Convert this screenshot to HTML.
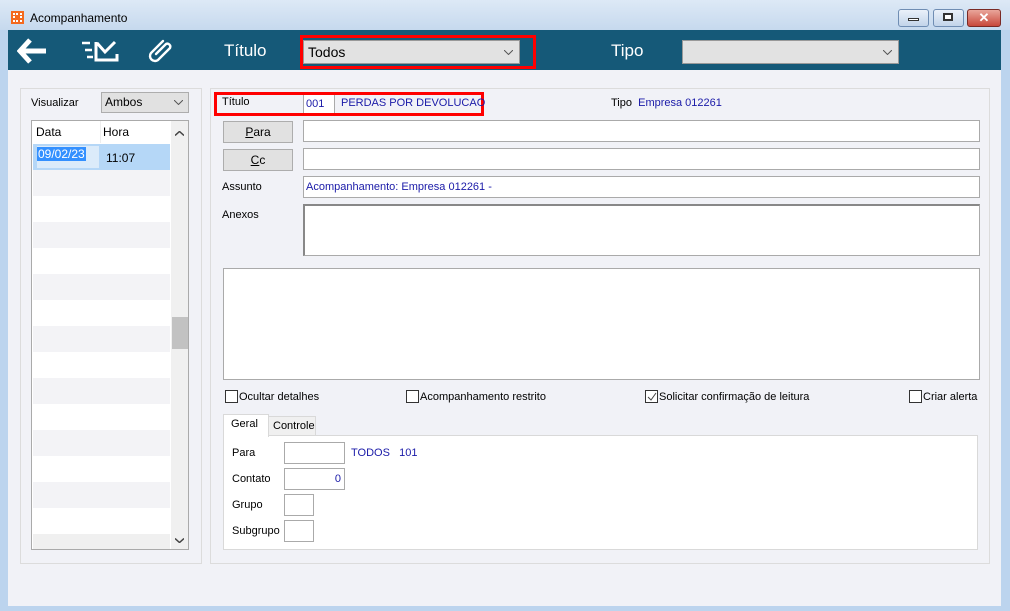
<!DOCTYPE html><html><head><meta charset="utf-8"><style>
*{box-sizing:border-box;margin:0;padding:0}
body{width:1010px;height:611px;overflow:hidden;background:#bcd4ee;font-family:"Liberation Sans",sans-serif;font-size:11px;color:#000;position:relative}
.a{position:absolute}
.tb{left:0;top:0;width:1010px;height:30px;background:linear-gradient(#dde9f6,#c6d9ee)}
.in{background:#fff;border:1px solid #aaa}
.btn{background:#e1e1e1;border:1px solid #adadad;text-align:center;line-height:20px;font-size:12px}
.cb{width:13px;height:13px;border:1px solid #333;background:#fff}
.blue{color:#1a1aa8}
.chev{position:absolute;width:9px;height:5px}
</style></head><body>
<div class="a tb"></div>
<div class="a" style="left:11px;top:11px;width:13px;height:13px;background:#f46a1f"></div>
<div class="a" style="left:13px;top:13px;width:9px;height:9px;border:2px dotted #fff"></div>
<div class="a" style="left:30px;top:11px;font-size:12px">Acompanhamento</div>
<div class="a" style="left:898px;top:9px;width:31px;height:18px;border:1px solid #6f8db3;border-radius:3px;background:linear-gradient(#eaf1fa,#c2d4ea)"></div>
<div class="a" style="left:908px;top:18px;width:11px;height:3px;border:1px solid #333;background:#fff"></div>
<div class="a" style="left:933px;top:9px;width:31px;height:18px;border:1px solid #6f8db3;border-radius:3px;background:linear-gradient(#eaf1fa,#c2d4ea)"></div>
<div class="a" style="left:943px;top:13px;width:10px;height:8px;border:2px solid #333;background:#fff"></div>
<div class="a" style="left:967px;top:9px;width:34px;height:18px;border:1px solid #7a2a25;border-radius:3px;background:linear-gradient(#e9a69b,#c8483b);color:#fff;text-align:center;font-weight:bold;font-size:13px;line-height:16px">✕</div>
<div class="a" style="left:8px;top:30px;width:993px;height:576px;background:#f1f2f7"></div>
<div class="a" style="left:8px;top:30px;width:993px;height:40px;background:#155978"></div>
<svg class="a" style="left:17px;top:38px" width="32" height="26" viewBox="0 0 32 26"><path d="M13 2 L3 13 L13 24 M3 13 H29" stroke="#fff" stroke-width="5" fill="none"/></svg>
<svg class="a" style="left:80px;top:40px" width="40" height="22" viewBox="0 0 40 22"><path d="M2 3h8M5 10h7M7 17h6" stroke="#fff" stroke-width="2.5"/><path d="M16 2v18h21V14" stroke="#fff" stroke-width="3" fill="none"/><path d="M17 3l8 9 10-10" stroke="#fff" stroke-width="3" fill="none"/></svg>
<svg class="a" style="left:148px;top:38px" width="26" height="26" viewBox="0 0 26 26"><path d="M8 16 L18 6 a3 3 0 0 1 4 4 L10 22 a5 5 0 0 1-7-7 L15 3" stroke="#fff" stroke-width="2.4" fill="none" stroke-linecap="round"/></svg>
<div class="a" style="left:224px;top:41px;color:#fff;font-size:17px">Título</div>
<div class="a" style="left:300px;top:35px;width:236px;height:34px;border:3px solid #f00"></div>
<div class="a" style="left:303px;top:40px;width:217px;height:24px;background:#e2e2e2;border:1px solid #999;font-size:14px;line-height:22px;padding-left:4px">Todos<svg class="chev" style="right:6px;top:9px" viewBox="0 0 9 5"><path d="M0 0l4.5 4.5L9 0" stroke="#555" fill="none"/></svg></div>
<div class="a" style="left:611px;top:41px;color:#fff;font-size:17px">Tipo</div>
<div class="a" style="left:682px;top:40px;width:217px;height:24px;background:#e2e2e2;border:1px solid #999"><svg class="chev" style="right:6px;top:9px" viewBox="0 0 9 5"><path d="M0 0l4.5 4.5L9 0" stroke="#555" fill="none"/></svg></div>

<div class="a" style="left:20px;top:88px;width:182px;height:476px;border:1px solid #dcdcdc"></div>
<div class="a" style="left:31px;top:97px">Visualizar</div>
<div class="a" style="left:101px;top:92px;width:88px;height:21px;background:#e1e1e1;border:1px solid #adadad;padding-left:3px;line-height:19px;font-size:12px">Ambos<svg class="chev" style="right:5px;top:7px" viewBox="0 0 9 5"><path d="M0 0l4.5 4.5L9 0" stroke="#555" fill="none"/></svg></div>
<div class="a" style="left:31px;top:120px;width:158px;height:430px;border:1px solid #aaa;background:#fff;overflow:hidden">
 <div class="a" style="left:2px;top:0;width:136px;height:23px;line-height:23px;padding-left:2px;font-size:12px">Data</div>
 <div class="a" style="left:68px;top:0;height:22px;border-left:1px solid #eee;line-height:23px;padding-left:2px;font-size:12px">Hora</div>
 <div class="a" style="left:1px;top:23px;width:137px;height:26px;background:#b5d7f7"></div>
 <div class="a" style="left:5px;top:25px;width:62px;height:22px;background:#dbebfa"></div>
 <div class="a" style="left:5px;top:26px;background:#3390ff;color:#fff;padding:0 1px;font-size:12px">09/02/23</div>
 <div class="a" style="left:74px;top:30px;font-size:12px">11:07</div>
 <div class="a" style="left:1px;top:49px;width:137px;height:26px;background:#f3f3f6"></div>
 <div class="a" style="left:1px;top:101px;width:137px;height:26px;background:#f3f3f6"></div>
 <div class="a" style="left:1px;top:153px;width:137px;height:26px;background:#f3f3f6"></div>
 <div class="a" style="left:1px;top:205px;width:137px;height:26px;background:#f3f3f6"></div>
 <div class="a" style="left:1px;top:257px;width:137px;height:26px;background:#f3f3f6"></div>
 <div class="a" style="left:1px;top:309px;width:137px;height:26px;background:#f3f3f6"></div>
 <div class="a" style="left:1px;top:361px;width:137px;height:26px;background:#f3f3f6"></div>
 <div class="a" style="left:1px;top:413px;width:137px;height:16px;background:#f0f0f0"></div>
 <div class="a" style="left:139px;top:0;width:18px;height:430px;background:#f0f0f0"></div>
 <svg class="chev" style="left:143px;top:10px" viewBox="0 0 9 5"><path d="M0 4.5L4.5 0.5L9 4.5" stroke="#444" stroke-width="1.5" fill="none"/></svg>
 <svg class="chev" style="left:143px;top:417px" viewBox="0 0 9 5"><path d="M0 0.5L4.5 4.5L9 0.5" stroke="#444" stroke-width="1.5" fill="none"/></svg>
 <div class="a" style="left:140px;top:196px;width:16px;height:32px;background:#c2c2c2"></div>
</div>

<div class="a" style="left:210px;top:88px;width:780px;height:476px;border:1px solid #dcdcdc"></div>
<div class="a" style="left:214px;top:92px;width:270px;height:24px;border:3px solid #f00"></div>
<div class="a" style="left:222px;top:96px">Título</div>
<div class="a" style="left:303px;top:95px;width:32px;height:18px;background:#fff;border-left:1px solid #aaa;border-right:1px solid #aaa;padding-left:2px;line-height:18px;color:#1a1aa8">001</div>
<div class="a blue" style="left:341px;top:97px">PERDAS POR DEVOLUCAO</div>
<div class="a" style="left:611px;top:97px">Tipo <span class="blue">&nbsp;Empresa 012261</span></div>
<div class="a btn" style="left:223px;top:121px;width:70px;height:22px"><u>P</u>ara</div>
<div class="a in" style="left:303px;top:120px;width:677px;height:22px"></div>
<div class="a btn" style="left:223px;top:149px;width:70px;height:22px"><u>C</u>c</div>
<div class="a in" style="left:303px;top:148px;width:677px;height:22px"></div>
<div class="a" style="left:222px;top:181px">Assunto</div>
<div class="a in blue" style="left:303px;top:176px;width:677px;height:22px;line-height:20px;padding-left:2px">Acompanhamento: Empresa 012261 -</div>
<div class="a" style="left:222px;top:209px">Anexos</div>
<div class="a in" style="left:303px;top:204px;width:677px;height:52px;border-top:2px solid #888;border-left:2px solid #888"></div>
<div class="a in" style="left:223px;top:268px;width:757px;height:112px"></div>
<div class="a cb" style="left:225px;top:390px"></div><div class="a" style="left:239px;top:391px">Ocultar detalhes</div>
<div class="a cb" style="left:406px;top:390px"></div><div class="a" style="left:420px;top:391px">Acompanhamento restrito</div>
<div class="a cb" style="left:645px;top:390px"><svg class="a" style="left:1px;top:1px" width="10" height="10" viewBox="0 0 10 10"><path d="M1 5l3 3 5-7" stroke="#444" fill="none"/></svg></div><div class="a" style="left:659px;top:391px">Solicitar confirmação de leitura</div>
<div class="a cb" style="left:909px;top:390px"></div><div class="a" style="left:923px;top:391px">Criar alerta</div>
<div class="a" style="left:223px;top:435px;width:755px;height:115px;background:#fff;border:1px solid #d9d9d9"></div>
<div class="a" style="left:268px;top:416px;width:48px;height:20px;background:#f0f0f0;border:1px solid #d9d9d9;padding-left:4px;line-height:19px">Controle</div>
<div class="a" style="left:223px;top:414px;width:46px;height:23px;background:#fff;border:1px solid #d9d9d9;border-bottom:none;padding-left:7px;line-height:19px">Geral</div>
<div class="a" style="left:232px;top:447px">Para</div>
<div class="a in" style="left:284px;top:442px;width:61px;height:22px"></div>
<div class="a blue" style="left:351px;top:447px">TODOS &nbsp;&nbsp;101</div>
<div class="a" style="left:232px;top:473px">Contato</div>
<div class="a in blue" style="left:284px;top:468px;width:61px;height:22px;text-align:right;padding-right:3px;line-height:21px">0</div>
<div class="a" style="left:232px;top:499px">Grupo</div>
<div class="a in" style="left:284px;top:494px;width:30px;height:22px"></div>
<div class="a" style="left:232px;top:525px">Subgrupo</div>
<div class="a in" style="left:284px;top:520px;width:30px;height:22px"></div>
</body></html>
